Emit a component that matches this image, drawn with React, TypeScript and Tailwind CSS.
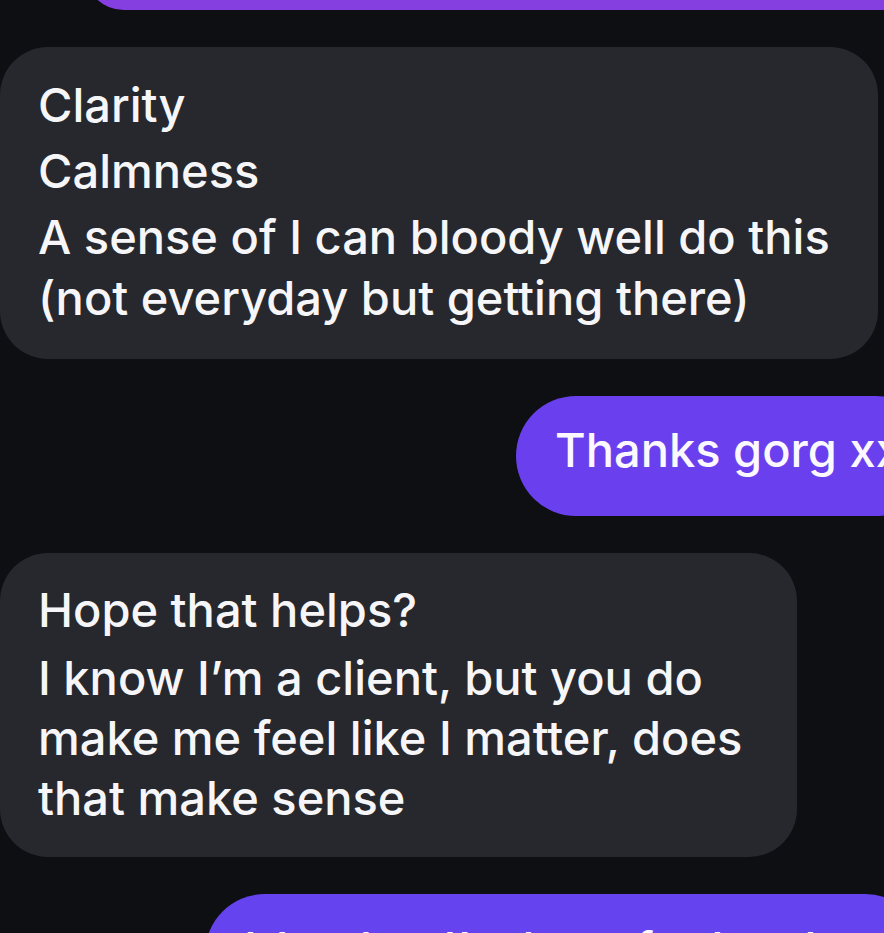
import React from "react";

const Line = ({ children, gap }: { children: React.ReactNode; gap?: boolean }) => (
  <div className={`whitespace-nowrap leading-[61px] ${gap ? "mt-[5px]" : ""}`}>{children}</div>
);

export default function App() {
  return (
    <div className="w-[884px] h-[933px] overflow-hidden bg-[#0d0f13] flex flex-col gap-[37px] font-['Inter','Noto_Sans',sans-serif] font-medium text-[47px] text-[#f6f6f8]">
      {/* end of previous outgoing message */}
      <div className="self-end mt-[-110px] h-[120px] w-[840px] mr-[-40px] rounded-[40px] bg-[#853fe0] shrink-0" />

      {/* incoming */}
      <div className="self-start w-fit rounded-[48px] bg-[#26282e] pl-[38px] pr-[48px] pt-[27px] pb-[31px] shrink-0">
        <Line>Clarity</Line>
        <Line gap>Calmness</Line>
        <Line gap>A sense of I can bloody well do this</Line>
        <Line>(not everyday but getting there)</Line>
      </div>

      {/* outgoing */}
      <div className="self-end w-[420px] mr-[-52px] h-[120px] rounded-[60px] bg-[#6a40ee] pl-[39px] pt-[23px] leading-[61px] shrink-0 text-[#fbf8ff]">
        <span className="whitespace-nowrap">Thanks gorg xx</span>
      </div>

      {/* incoming */}
      <div className="self-start w-[797px] rounded-[48px] bg-[#26282e] pl-[38px] pr-[50px] pt-[26px] pb-[29px] shrink-0">
        <Line>Hope that helps?</Line>
        <div className="mt-[8px] leading-[60px] whitespace-nowrap">
          <div>I know I’m a client, but you do</div>
          <div>make me feel like I matter, does</div>
          <div>that make sense</div>
        </div>
      </div>

      {/* outgoing, cut off at the bottom */}
      <div className="self-end w-[720px] mr-[-41px] h-[120px] rounded-[60px] bg-[#6544ef] pl-[39px] pt-[24px] leading-[61px] shrink-0 text-[#fbf8ff]">
        <span className="whitespace-nowrap">It’s what I’m here for lovely</span>
      </div>
    </div>
  );
}
